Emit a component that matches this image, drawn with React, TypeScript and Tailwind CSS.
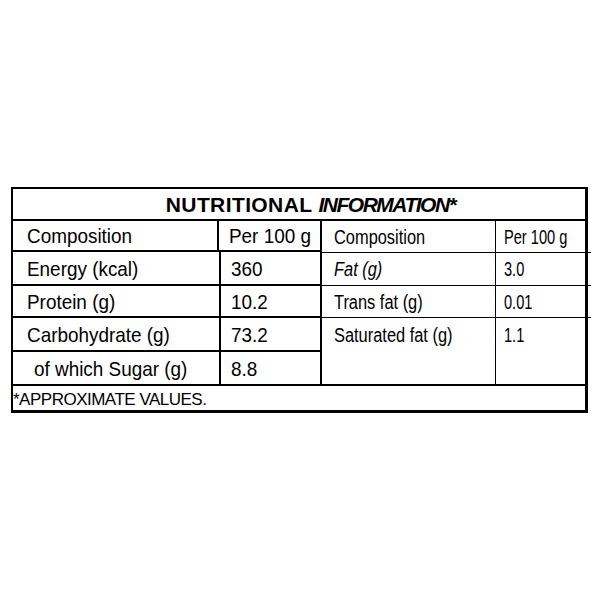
const font = { fontFamily: '"Liberation Sans", Arial, sans-serif' }

const leftRows = [
  { label: "Composition", value: "Per 100 g", h: "h-[31px]" },
  { label: "Energy (kcal)", value: "360", h: "h-[34px]" },
  { label: "Protein (g)", value: "10.2", h: "h-[32px]" },
  { label: "Carbohydrate (g)", value: "73.2", h: "h-[34px]" },
  { label: "of which Sugar (g)", value: "8.8", h: "h-[32px]", indent: true },
]

const rightRows = [
  { label: "Composition", value: "Per 100 g", h: "h-[32px]" },
  { label: "Fat (g)", value: "3.0", h: "h-[33px]", italic: true },
  { label: "Trans fat (g)", value: "0.01", h: "h-[32px]" },
  { label: "Saturated fat (g)", value: "1.1", h: "h-[66px]", top: true },
]

export default function App() {
  return (
    <div className="w-[600px] h-[600px] bg-white text-black" style={font}>
      <div className="ml-[11px] pt-[187px] w-[577px]">
        <div className="border-2 border-r-[3px] border-b-[3px] border-black">
          <div className="h-[32px] flex items-center justify-center border-b-2 border-black text-[21px] font-bold leading-none pl-[23px]">
            <span className="tracking-[0.4px]">NUTRITIONAL</span>
            <span className="italic ml-[6px] tracking-[-1.5px]">INFORMATION*</span>
          </div>
          <div className="flex border-b-2 border-black">
            <div className="w-[309px] border-r-2 border-black">
              {leftRows.map((r, i) => (
                <div key={i} className={`flex ${r.h} ${i < leftRows.length - 1 ? "border-b-2 border-black" : ""}`}>
                  <div className={`w-[208px] border-r-2 border-black flex items-center text-[21px] leading-none whitespace-nowrap ${r.indent ? "pl-[21px]" : "pl-[14px]"}`}>
                    <span className="inline-block origin-left scale-x-[0.9]">{r.label}</span>
                  </div>
                  <div className="flex-1 flex items-center pl-[10px] text-[21px] leading-none whitespace-nowrap">
                    <span className="inline-block origin-left scale-x-[0.9]">{r.value}</span>
                  </div>
                </div>
              ))}
            </div>
            <div className="flex-1 pr-[5px]">
              {rightRows.map((r, i) => (
                <div key={i} className={`flex ${r.h} ${i < rightRows.length - 1 ? "border-b-[1.5px] border-black" : ""}`}>
                  <div className={`w-[174px] border-r border-black flex pl-[12px] text-[20px] leading-none whitespace-nowrap ${r.top ? "items-start pt-[7px]" : "items-center"} ${r.italic ? "italic" : ""}`}>
                    <span className="inline-block origin-left scale-x-[0.82]">{r.label}</span>
                  </div>
                  <div className={`flex-1 flex pl-[8px] text-[20px] leading-none whitespace-nowrap ${r.top ? "items-start pt-[7px]" : "items-center"}`}>
                    <span className="inline-block origin-left scale-x-[0.73]">{r.value}</span>
                  </div>
                </div>
              ))}
            </div>
          </div>
          <div className="h-[24px] flex items-end text-[17px] leading-none pb-[2px] tracking-[-0.5px] whitespace-nowrap">
            *APPROXIMATE VALUES.
          </div>
        </div>
      </div>
    </div>
  )
}
